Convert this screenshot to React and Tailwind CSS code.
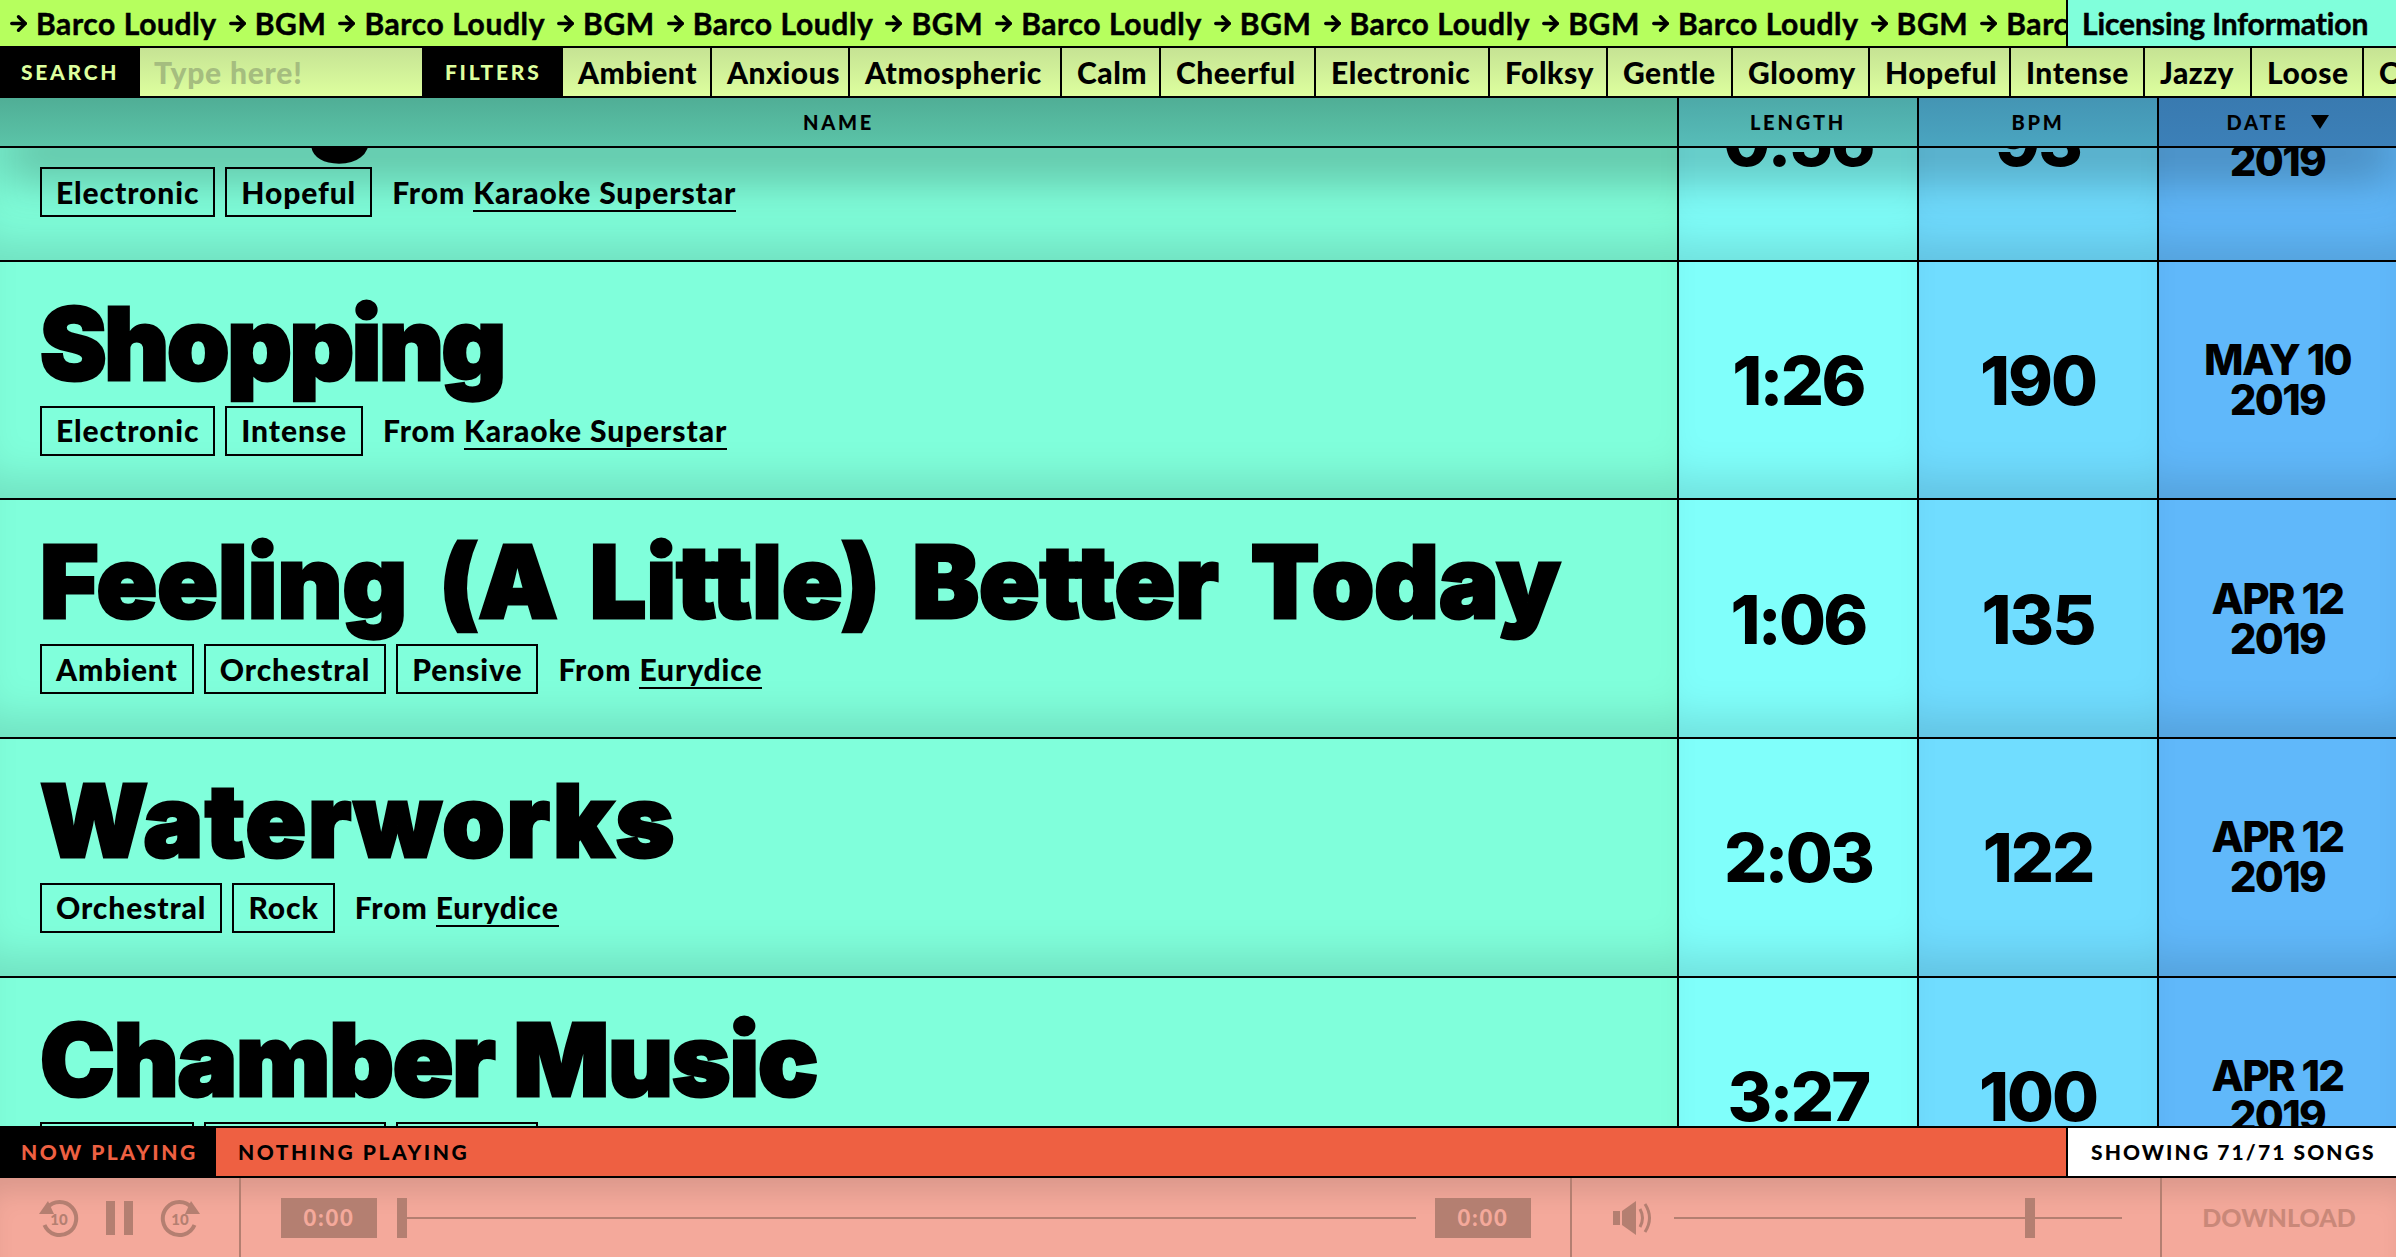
import React from "react";
import { ArrowRight } from "lucide-react";

const FILTERS = [
  ["Ambient", "w-[149px]"],
  ["Anxious", "w-[138px]"],
  ["Atmospheric", "w-[212px]"],
  ["Calm", "w-[99px]"],
  ["Cheerful", "w-[155px]"],
  ["Electronic", "w-[174px]"],
  ["Folksy", "w-[118px]"],
  ["Gentle", "w-[125px]"],
  ["Gloomy", "w-[137px]"],
  ["Hopeful", "w-[141px]"],
  ["Intense", "w-[134px]"],
  ["Jazzy", "w-[107px]"],
  ["Loose", "w-[112px]"],
  ["Orchestral", "w-[174px]"],
];

const SONGS = [
  { title: "Sailing", fit: "tracking-[-2px]", tags: ["Electronic", "Hopeful"], from: "Karaoke Superstar", length: "0:56", bpm: "93", date: "MAY 10" },
  { title: "Shopping", fit: "tracking-[-2.3px]", tags: ["Electronic", "Intense"], from: "Karaoke Superstar", length: "1:26", bpm: "190", date: "MAY 10" },
  { title: "Feeling (A Little) Better Today", fit: "tracking-[0.1px] [word-spacing:12px]", tags: ["Ambient", "Orchestral", "Pensive"], from: "Eurydice", length: "1:06", bpm: "135", date: "APR 12" },
  { title: "Waterworks", fit: "tracking-[1.7px]", tags: ["Orchestral", "Rock"], from: "Eurydice", length: "2:03", bpm: "122", date: "APR 12" },
  { title: "Chamber Music", fit: "tracking-[-1.1px]", tags: ["Ambient", "Orchestral", "Pensive"], from: "Eurydice", length: "3:27", bpm: "100", date: "APR 12" },
];

const rowShade = "shadow-[inset_0_-40px_40px_-20px_rgba(0,0,0,0.12)]";

const Marquee = () => {
  const items = [];
  for (let i = 0; i < 7; i++) {
    items.push("Barco Loudly", "BGM");
  }
  return (
    <div className="flex flex-1 items-center overflow-hidden pl-[7px] tracking-[0.6px] whitespace-nowrap [-webkit-text-stroke:0.5px_black]">
      {items.map((item, i) => (
        <span key={i} className="flex shrink-0 items-center">
          <ArrowRight size={23} strokeWidth={3.6} className="mr-[6px]" />
          <span className="mr-[9px]">{item}</span>
        </span>
      ))}
    </div>
  );
};

const Song = ({ song }) => (
  <div className="grid h-[238.67px] shrink-0 grid-cols-[1679px_240px_240px_1fr] border-b-2 border-black">
    <div className={`overflow-hidden border-r-2 border-black bg-[#80ffdb] pl-[40px] ${rowShade}`}>
      <h2 className={`mt-[22px] h-[122px] font-['Inter',sans-serif] text-[100px] leading-[120px] font-black whitespace-nowrap [-webkit-text-stroke:3px_black] ${song.fit}`}>
        {song.title}
      </h2>
      <div className="flex items-center gap-[10px] text-[30px] font-black tracking-[0.9px]">
        {song.tags.map((tag) => (
          <span key={tag} className="flex h-[50px] items-center border-2 border-black px-[14px]">
            {tag}
          </span>
        ))}
        <span className="ml-[10px]">
          From{" "}
          <span className="border-b-2 border-black">{song.from}</span>
        </span>
      </div>
    </div>
    <div className={`flex items-center justify-center border-r-2 border-black bg-[#80fffb] font-['Inter',sans-serif] text-[68px] font-extrabold tracking-[-0.04em] ${rowShade}`}>
      {song.length}
    </div>
    <div className={`flex items-center justify-center border-r-2 border-black bg-[#70ddff] font-['Inter',sans-serif] text-[68px] font-extrabold tracking-[-0.03em] ${rowShade}`}>
      {song.bpm}
    </div>
    <div className={`flex flex-col items-center justify-center bg-[#60b8fa] font-['Inter',sans-serif] text-[42px] leading-[40px] font-extrabold tracking-[-0.04em] ${rowShade}`}>
      <span>{song.date}</span>
      <span>2019</span>
    </div>
  </div>
);

const SkipIcon = ({ flip }) => (
  <svg width="40" height="40" viewBox="0 0 40 40" className="text-[#b47f71]">
    <g transform={flip ? "translate(40 0) scale(-1 1)" : undefined}>
      <path d="M8 10 A 16.5 16.5 0 1 1 5.5 27" fill="none" stroke="currentColor" strokeWidth="4" />
      <polygon points="0,16 15,16 9,3" fill="currentColor" />
    </g>
    <text x="20" y="27" textAnchor="middle" fontSize="15" fontWeight="900" fill="currentColor" fontFamily="Lato, sans-serif">
      10
    </text>
  </svg>
);

const SpeakerIcon = () => (
  <svg width="42" height="36" viewBox="0 0 42 36" className="text-[#b47f71]">
    <polygon points="0,11 7,11 7,25 0,25" fill="currentColor" />
    <polygon points="9,11 23,1 23,35 9,25" fill="currentColor" />
    <path d="M27 9 Q32 18 27 27" fill="none" stroke="currentColor" strokeWidth="3" />
    <path d="M32 4 Q41 18 32 32" fill="none" stroke="currentColor" strokeWidth="3" />
  </svg>
);

const TimeBox = () => (
  <div className="flex h-[40px] w-[96px] shrink-0 items-center justify-center bg-[#b47f71] text-[22px] font-black tracking-[0.08em] text-[#f4a99b]">
    0:00
  </div>
);

export default function App() {
  return (
    <div className="flex h-screen flex-col overflow-hidden bg-[#80ffdb] font-['Lato',sans-serif] text-black">
      {/* top marquee */}
      <div className="relative z-20 flex h-[48px] shrink-0 border-b-2 border-black bg-[#b6ff5e] text-[30px] font-bold">
        <Marquee />
        <div className="flex w-[330px] shrink-0 items-center border-l-2 border-black bg-[#80ffdb] pl-[14px] tracking-[-0.1px] whitespace-nowrap [-webkit-text-stroke:0.5px_black]">
          Licensing Information
        </div>
      </div>

      {/* search and filters */}
      <div className="relative z-20 flex h-[50px] shrink-0 overflow-hidden border-b-2 border-black bg-black">
        <div className="flex w-[140px] shrink-0 items-center pl-[21px] text-[21px] font-black tracking-[0.13em] text-[#ddff9e]">
          SEARCH
        </div>
        <div className="flex w-[282px] shrink-0 items-center bg-gradient-to-b from-[#c6e394] to-[#ddff9e] pl-[14px] text-[30px] font-black tracking-[0.8px] text-[#a5bd7f]">
          Type here!
        </div>
        <div className="flex w-[141px] shrink-0 items-center pl-[23px] text-[21px] font-black tracking-[0.13em] text-[#ddff9e]">
          FILTERS
        </div>
        {FILTERS.map(([name, width]) => (
          <div
            key={name}
            className={`flex shrink-0 items-center border-r-2 border-black bg-gradient-to-b from-[#c6e394] to-[#ddff9e] pl-[15px] text-[30px] font-black tracking-[0.5px] whitespace-nowrap ${width}`}
          >
            {name}
          </div>
        ))}
      </div>

      {/* song table */}
      <div className="relative min-h-0 flex-1 overflow-hidden">
        <div className="relative z-10 grid h-[50px] grid-cols-[1679px_240px_240px_1fr] border-b-2 border-black text-[20px] font-black tracking-[0.14em] shadow-[0_30px_50px_0_rgba(0,0,0,0.28)]">
          <div className="flex items-center justify-center border-r-2 border-black bg-gradient-to-b from-[#50ae96] to-[#5bc4a8]">NAME</div>
          <div className="flex items-center justify-center border-r-2 border-black bg-gradient-to-b from-[#4da9a8] to-[#57bdb8]">LENGTH</div>
          <div className="flex items-center justify-center border-r-2 border-black bg-gradient-to-b from-[#4495b4] to-[#4aa5c0]">BPM</div>
          <div className="flex items-center justify-center gap-[22px] bg-gradient-to-b from-[#397ab0] to-[#3c80b8]">
            DATE
            <svg width="18" height="14" viewBox="0 0 18 14">
              <polygon points="0,0 18,0 9,14" fill="black" />
            </svg>
          </div>
        </div>
        <div className="mt-[-125px] flex flex-col">
          {SONGS.map((song) => (
            <Song key={song.title} song={song} />
          ))}
        </div>
      </div>

      {/* now playing */}
      <div className="relative z-20 flex h-[52px] shrink-0 border-y-2 border-black bg-[#ee6042] text-[21px] font-black tracking-[0.12em]">
        <div className="flex w-[216px] shrink-0 items-center bg-black pl-[21px] text-[#ee6042]">NOW PLAYING</div>
        <div className="flex flex-1 items-center pl-[22px]">NOTHING PLAYING</div>
        <div className="flex w-[330px] shrink-0 items-center border-l-2 border-black bg-white pl-[23px] text-[21px] tracking-[0.1em]">
          SHOWING 71/71 SONGS
        </div>
      </div>

      {/* player controls */}
      <div className="flex h-[79px] shrink-0 bg-[#f4a99b] shadow-[inset_0_24px_26px_-10px_rgba(0,0,0,0.1)]">
        <div className="flex w-[241px] shrink-0 items-center gap-[27px] border-r-2 border-[#b47f71] pl-[39px]">
          <SkipIcon />
          <div className="flex gap-[9px]">
            <div className="h-[34px] w-[9px] bg-[#b47f71]" />
            <div className="h-[34px] w-[9px] bg-[#b47f71]" />
          </div>
          <SkipIcon flip />
        </div>
        <div className="flex w-[1331px] shrink-0 items-center border-r-2 border-[#b47f71] pl-[40px]">
          <TimeBox />
          <div className="ml-[20px] h-[40px] w-[10px] shrink-0 bg-[#b47f71]" />
          <div className="mr-[19px] h-[2px] flex-1 bg-[#b47f71]" />
          <TimeBox />
          <div className="w-[39px] shrink-0" />
        </div>
        <div className="flex w-[590px] shrink-0 items-center border-r-2 border-[#b47f71] pl-[41px]">
          <SpeakerIcon />
          <div className="relative ml-[19px] flex h-[40px] w-[448px] items-center">
            <div className="h-[2px] w-full bg-[#b47f71]" />
            <div className="absolute top-0 left-[351px] h-[40px] w-[10px] bg-[#b47f71]" />
          </div>
        </div>
        <div className="flex flex-1 items-center justify-center text-[25px] font-black text-[#c98879]">DOWNLOAD</div>
      </div>
    </div>
  );
}
